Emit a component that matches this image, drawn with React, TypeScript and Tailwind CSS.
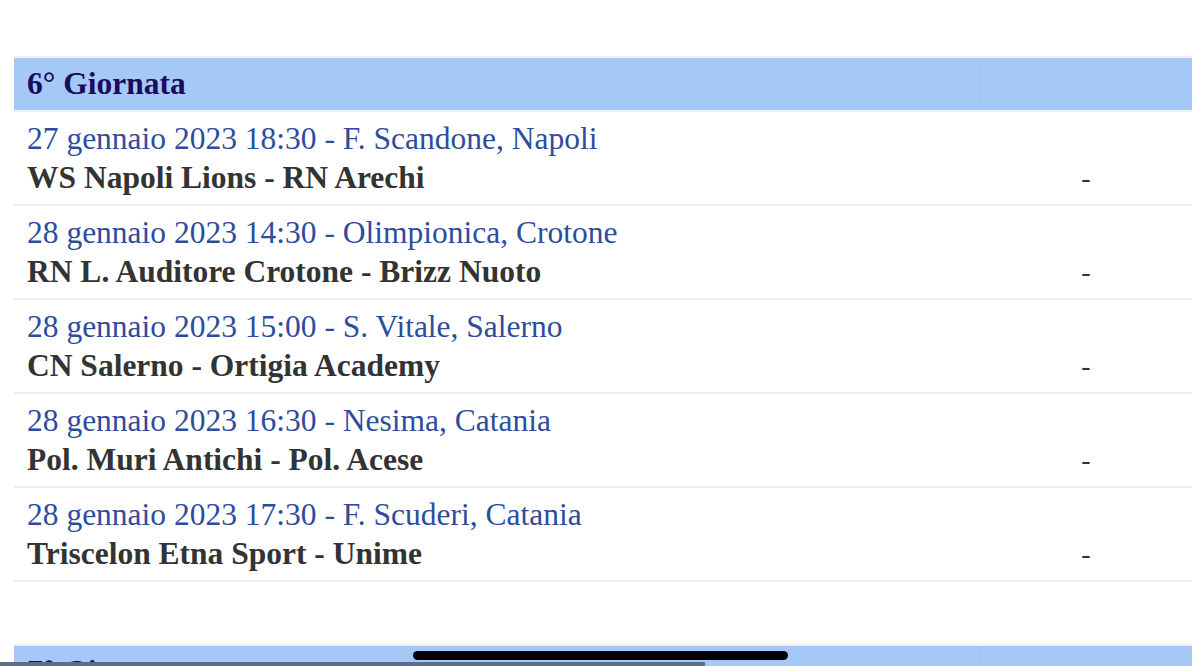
import React from 'react';

const matches = [
  { when: '27 gennaio 2023 18:30 - F. Scandone, Napoli', teams: 'WS Napoli Lions - RN Arechi' },
  { when: '28 gennaio 2023 14:30 - Olimpionica, Crotone', teams: 'RN L. Auditore Crotone - Brizz Nuoto' },
  { when: '28 gennaio 2023 15:00 - S. Vitale, Salerno', teams: 'CN Salerno - Ortigia Academy' },
  { when: '28 gennaio 2023 16:30 - Nesima, Catania', teams: 'Pol. Muri Antichi - Pol. Acese' },
  { when: '28 gennaio 2023 17:30 - F. Scuderi, Catania', teams: 'Triscelon Etna Sport - Unime' },
];

export default function App() {
  return (
    <main className="relative h-[666px] w-[1200px] overflow-hidden bg-white font-['Liberation_Serif',serif] antialiased">
      <div className="ml-[14px] mt-[56px] w-[1178px]">
        {/* Header */}
        <div className="grid grid-cols-[966px_212px] border-y-2 border-[#eef0f3] bg-[#a4c9f7]">
          <h2 className="h-[52px] pl-[13px] text-[31.5px] font-bold leading-[52px] text-[#1b0b5c]">6° Giornata</h2>
          <div className="border-l border-[#9fc3f0]" />
        </div>

        {/* Matches */}
        {matches.map((m) => (
          <div key={m.when} className="grid grid-cols-[966px_212px] border-b-2 border-[#eeeeee] pb-[7px] pt-[7px]">
            <div className="pl-[13px]">
              <p className="text-[31.5px] leading-[39px] text-[#2d4d9c]">{m.when}</p>
              <p className="text-[31.5px] font-bold leading-[39px] text-[#333333]">{m.teams}</p>
            </div>
            <div className="flex flex-col justify-end">
              <p className="text-center text-[28px] leading-[39px] text-[#333333]">-</p>
            </div>
          </div>
        ))}

        {/* Next round, cut off */}
        <div className="mt-[62px] grid grid-cols-[966px_212px] border-t-2 border-[#eef0f3] bg-[#a4c9f7]">
          <h2 className="h-[52px] pl-[13px] text-[31.5px] font-bold leading-[52px] text-[#1b0b5c]">7° Giornata</h2>
          <div className="border-l border-[#9fc3f0]" />
        </div>
      </div>

      {/* iOS overlays */}
      <div className="absolute left-[413px] top-[651px] h-[9px] w-[375px] rounded-full bg-black" />
      <div className="absolute bottom-0 left-0 h-[4px] w-[705px] bg-[#5b6e88]" />
    </main>
  );
}
